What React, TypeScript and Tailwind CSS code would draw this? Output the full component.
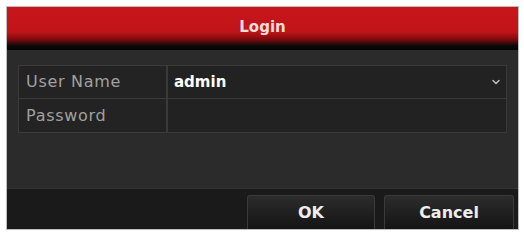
import { ChevronDown } from 'lucide-react';

const font = { fontFamily: '"DejaVu Sans", "Liberation Sans", sans-serif' };

function Row({ label, value, dropdown }: { label: string; value?: string; dropdown?: boolean }) {
    return (
        <div className="flex h-[33px] border-b border-[#3a3a3a] last:border-b-0">
            <div className="w-[149px] shrink-0 flex items-center pl-[7px] border-r-2 border-[#3a3a3a] bg-[#232323] text-[16px] tracking-[0.7px] text-[#a0a0a0]">
                {label}
            </div>
            <div className="flex-1 flex items-center justify-between pl-[6px] pr-[4px] bg-[#222222]">
                <span className="text-[15px] font-bold text-white">{value}</span>
                {dropdown && <ChevronDown className="w-[12px] h-[12px] text-[#bdbdbd]" strokeWidth={3} />}
            </div>
        </div>
    );
}

export default function App() {
    return (
        <div className="w-[524px] h-[234px] bg-white pt-[6px] pl-[6px] pr-[5px] pb-[4px]" style={font}>
            <div className="w-full h-full flex flex-col border border-[#bdbdbd] bg-[#2b2b2b]">
                {/* Title bar */}
                <div className="h-[43px] shrink-0 flex items-center justify-center bg-[linear-gradient(to_bottom,#c8151c_0%,#c01419_58%,#7a0a0c_76%,#0a0a0a_90%,#050505_100%)]">
                    <span className="text-[15px] font-bold text-[#f4dcdc] -mt-[2px]">Login</span>
                </div>

                {/* Form */}
                <div className="flex-1 pt-[15px] px-[11px]">
                    <div className="border border-[#3a3a3a]">
                        <Row label="User Name" value="admin" dropdown />
                        <Row label="Password" />
                    </div>
                </div>

                {/* Footer */}
                <div className="h-[41px] shrink-0 flex items-end justify-end gap-[9px] pr-[4px] bg-[#1a1a1a] border-t border-[#333]">
                    <button className="w-[128px] h-[34px] rounded-t-[3px] bg-[linear-gradient(to_bottom,#2c2c2c,#141414)] border-t border-x border-[#3a3a3a] text-[16px] font-bold text-[#ededed]">
                        OK
                    </button>
                    <button className="w-[130px] h-[34px] rounded-t-[3px] bg-[linear-gradient(to_bottom,#2c2c2c,#141414)] border-t border-x border-[#3a3a3a] text-[16px] font-bold text-[#ededed]">
                        Cancel
                    </button>
                </div>
            </div>
        </div>
    );
}
